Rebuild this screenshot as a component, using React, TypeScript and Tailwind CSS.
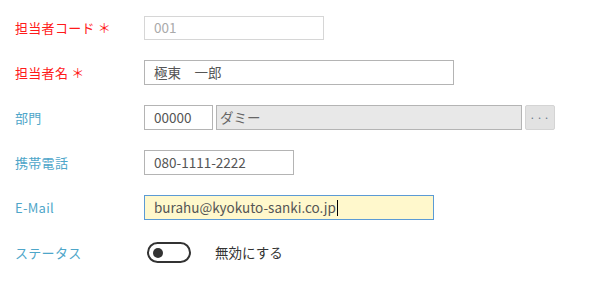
import React from "react";

const font = { fontFamily: '"Noto Sans CJK JP", "Noto Sans", sans-serif' };

type RowProps = { label: string; required?: boolean; children: React.ReactNode };

const Row: React.FC<RowProps> = ({ label, required, children }) => (
  <div className="flex h-[25px] items-center">
    <div
      className={[
        "w-[129px] shrink-0 text-[13px] leading-none tracking-[0.3px]",
        required ? "text-[#ff1a1a]" : "text-[#4ea6c9]",
      ].join(" ")}
    >
      {label}
      {required && <span className="ml-[3px]">＊</span>}
    </div>
    {children}
  </div>
);

export default function App() {
  return (
    <div className="min-h-screen bg-white" style={font}>
      <div className="flex flex-col gap-5 pl-[15px] pt-[15px]">
        <Row label="担当者コード" required>
          <div className="flex h-[24px] w-[180px] items-center border border-[#d6d6d6] px-[9px] text-[13.5px] text-[#aaaaaa]">
            001
          </div>
        </Row>

        <Row label="担当者名" required>
          <div className="flex h-[25px] w-[310px] items-center border border-[#b4b4b4] px-[9px] text-[13.5px] text-[#555555]">
            極東　一郎
          </div>
        </Row>

        <Row label="部門">
          <div className="flex items-center gap-[3px]">
            <div className="flex h-[25px] w-[69px] items-center border border-[#b4b4b4] px-[9px] text-[13.5px] text-[#555555]">
              00000
            </div>
            <div className="flex h-[25px] w-[306px] items-center border border-[#b4b4b4] bg-[#e8e8e8] px-[3px] text-[13.5px] text-[#666666]">
              ダミー
            </div>
            <button
              type="button"
              className="flex h-[25px] w-[30px] items-center justify-center rounded-[2px] border border-[#d4d4d4] bg-[#e2e2e2] text-[11px] tracking-[1px] text-[#6a7a8c]"
            >
              ···
            </button>
          </div>
        </Row>

        <Row label="携帯電話">
          <div className="flex h-[25px] w-[150px] items-center border border-[#b4b4b4] px-[9px] text-[13.5px] text-[#555555]">
            080-1111-2222
          </div>
        </Row>

        <Row label="E-Mail">
          <div className="flex h-[25px] w-[290px] items-center border border-[#5b9bd5] bg-[#fff8cc] px-[9px] text-[13.5px] text-[#555555]">
            <span>burahu@kyokuto-sanki.co.jp</span>
            <span className="ml-[1px] h-[16px] w-px bg-black" />
          </div>
        </Row>

        <Row label="ステータス">
          <div className="flex items-center">
            <div className="ml-[3px] flex h-[21px] w-[44px] items-center rounded-full border-2 border-[#333333] bg-white pl-[4px]">
              <div className="h-[10px] w-[10px] rounded-full bg-[#333333]" />
            </div>
            <span className="ml-[24px] text-[13.5px] text-[#333333]">無効にする</span>
          </div>
        </Row>
      </div>
    </div>
  );
}
